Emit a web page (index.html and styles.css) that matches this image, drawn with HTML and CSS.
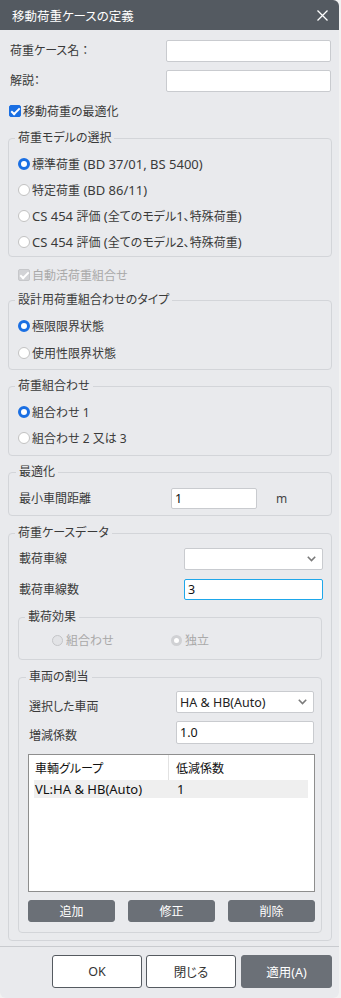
FILE: index.html
```html
<!DOCTYPE html>
<html lang="ja">
<head>
    <meta charset="UTF-8">
    <title>移動荷重ケースの定義</title>
    <link rel="stylesheet" href="styles.css">
</head>
<body>
    <div class="dialog">
        <div class="titlebar">
            <span>移動荷重ケースの定義</span>
            <svg class="close" width="11" height="11" viewBox="0 0 11 11">
                <path d="M0.5 0.5 L10.5 10.5 M10.5 0.5 L0.5 10.5" stroke="#fff" stroke-width="1.3"/>
            </svg>
        </div>

        <div class="content">
            <div class="field-row top-row">
                <span class="label">荷重ケース名 ：</span>
                <input class="text-input wide" type="text" value="">
            </div>
            <div class="field-row top-row second">
                <span class="label">解説：</span>
                <input class="text-input wide" type="text" value="">
            </div>
            <div class="check-row">
                <span class="checkbox checked"></span>
                <span>移動荷重の最適化</span>
            </div>

            <fieldset class="group g-model">
                <legend>荷重モデルの選択</legend>
                <div class="radio-row"><span class="radio checked"></span>標準荷重<span class="en">&nbsp;(BD 37/01, BS 5400)</span></div>
                <div class="radio-row"><span class="radio"></span>特定荷重<span class="en">&nbsp;(BD 86/11)</span></div>
                <div class="radio-row"><span class="radio"></span><span class="en">CS 454&nbsp;</span>評価<span class="en">&nbsp;(</span>全てのモデル<span class="en">1</span>、特殊荷重<span class="en">)</span></div>
                <div class="radio-row"><span class="radio"></span><span class="en">CS 454&nbsp;</span>評価<span class="en">&nbsp;(</span>全てのモデル<span class="en">2</span>、特殊荷重<span class="en">)</span></div>
            </fieldset>

            <div class="check-row disabled auto">
                <span class="checkbox checked"></span>
                <span>自動活荷重組合せ</span>
            </div>

            <fieldset class="group g-type">
                <legend>設計用荷重組合わせのタイプ</legend>
                <div class="radio-row tall"><span class="radio checked"></span>極限限界状態</div>
                <div class="radio-row tall"><span class="radio"></span>使用性限界状態</div>
            </fieldset>

            <fieldset class="group g-comb">
                <legend>荷重組合わせ</legend>
                <div class="radio-row"><span class="radio checked"></span>組合わせ 1</div>
                <div class="radio-row"><span class="radio"></span>組合わせ 2 又は 3</div>
            </fieldset>

            <fieldset class="group g-opt">
                <legend>最適化</legend>
                <div class="field-row opt-row">
                    <span class="label">最小車間距離</span>
                    <input class="text-input dist" type="text" value="1">
                    <span class="unit">m</span>
                </div>
            </fieldset>

            <fieldset class="group g-data">
                <legend>荷重ケースデータ</legend>
                <div class="field-row lane-row">
                    <span class="label">載荷車線</span>
                    <div class="select lane-select">
                        <span></span>
                        <svg width="9" height="6" viewBox="0 0 9 6"><path d="M0.8 0.8 L4.5 4.5 L8.2 0.8" fill="none" stroke="#7a7a7a" stroke-width="1.6"/></svg>
                    </div>
                </div>
                <div class="field-row lane-row count">
                    <span class="label">載荷車線数</span>
                    <input class="text-input lane-count" type="text" value="3">
                </div>

                <fieldset class="group sub g-effect">
                    <legend>載荷効果</legend>
                    <div class="effect-row">
                        <div class="effect-item first"><span class="radio off"></span>組合わせ</div>
                        <div class="effect-item"><span class="radio off checked"></span>独立</div>
                    </div>
                </fieldset>

                <fieldset class="group sub g-vehicle">
                    <legend>車両の割当</legend>
                    <div class="field-row veh-row">
                        <span class="label low">選択した車両</span>
                        <div class="select veh-select">
                            <span>HA &amp; HB(Auto)</span>
                            <svg width="9" height="6" viewBox="0 0 9 6"><path d="M0.8 0.8 L4.5 4.5 L8.2 0.8" fill="none" stroke="#7a7a7a" stroke-width="1.6"/></svg>
                        </div>
                    </div>
                    <div class="field-row veh-row factor">
                        <span class="label lower">増減係数</span>
                        <input class="text-input veh-factor" type="text" value="1.0">
                    </div>

                    <div class="grid-table">
                        <div class="grid-head">
                            <div class="cell c1">車輌グループ</div>
                            <div class="cell c2">低減係数</div>
                        </div>
                        <div class="grid-line selected">
                            <div class="cell c1">VL:HA &amp; HB(Auto)</div>
                            <div class="cell c2">1</div>
                        </div>
                    </div>

                    <div class="small-buttons">
                        <button class="btn dark">追加</button>
                        <button class="btn dark">修正</button>
                        <button class="btn dark">削除</button>
                    </div>
                </fieldset>
            </fieldset>
        </div>

        <div class="footer">
            <button class="btn light">OK</button>
            <button class="btn light">閉じる</button>
            <button class="btn dark">適用(A)</button>
        </div>
    </div>
</body>
</html>
```

FILE: styles.css
```css
* {
    margin: 0;
    padding: 0;
    box-sizing: border-box;
}

body {
    background: #f2f2f2;
    font-family: "Noto Sans", "Noto Sans CJK JP", sans-serif;
    font-size: 12px;
    color: #3a3a3a;
    font-feature-settings: "palt";
}

.dialog {
    width: 339px;
    height: 998px;
    background: #e9eaed;
    border-radius: 0 6px 6px 6px;
    overflow: hidden;
    display: flex;
    flex-direction: column;
}

.titlebar {
    height: 30px;
    background: #545a61;
    color: #fff;
    display: flex;
    align-items: center;
    justify-content: space-between;
    padding: 0 11px 0 12px;
    font-size: 12.5px;
}

.content {
    flex: 1;
    padding: 10px 7px 0 8px;
}

/* rows */
.field-row {
    display: flex;
    align-items: center;
}

.label {
    line-height: 16px;
}

.top-row {
    height: 22px;
    padding-left: 2px;
}

.top-row.second {
    margin-top: 8px;
}

.text-input {
    height: 22px;
    border: 1px solid #c9cbcf;
    border-radius: 2px;
    background: #fff;
    font-family: "Noto Sans", "Noto Sans CJK JP", sans-serif;
    font-size: 12.5px;
    color: #111;
    padding: 0 3px;
    outline: none;
}

.text-input.wide {
    width: 165px;
    margin-left: auto;
    margin-right: 1px;
}

.check-row {
    display: flex;
    align-items: center;
    height: 18px;
    margin-top: 10px;
    padding-left: 1px;
}

.check-row.auto {
    margin-top: 9px;
    padding-left: 10px;
}

.check-row.disabled {
    color: #a9a9a9;
}

.checkbox {
    width: 12px;
    height: 12px;
    border-radius: 2px;
    border: 1px solid #b5b5b5;
    background: #fff;
    margin-right: 2px;
    position: relative;
}

.checkbox.checked {
    background: #1a6fe3;
    border-color: #1a6fe3;
}

.checkbox.checked::after {
    content: '';
    position: absolute;
    left: 3px;
    top: 0px;
    width: 3px;
    height: 7px;
    border: solid #fff;
    border-width: 0 2px 2px 0;
    transform: rotate(45deg);
}

.disabled .checkbox.checked {
    background: #d2d3d6;
    border-color: #c6c7ca;
}

/* groups */
.group {
    border: 1px solid #d3d5d9;
    border-radius: 4px;
    padding: 0 7px 0 9px;
    margin-top: 9px;
}

.group legend {
    line-height: 14px;
    padding: 0 3px;
    margin-left: -3px;
}

.g-model {
    margin-top: 11px;
    padding-top: 6px;
    padding-bottom: 1px;
}

.g-type {
    padding-top: 5px;
    padding-bottom: 3px;
}

.g-comb {
    padding-top: 6px;
    padding-bottom: 4px;
}

.radio-row {
    height: 26px;
    display: flex;
    align-items: center;
    white-space: pre;
}

.radio-row .en {
    font-size: 13px;
}

.radio-row.tall {
    height: 27px;
}

.radio {
    width: 12px;
    height: 12px;
    border-radius: 50%;
    border: 1px solid #c2c2c2;
    background: #fff;
    margin-right: 2px;
    flex-shrink: 0;
}

.radio.checked {
    border: 3.5px solid #1a6fe3;
}

.radio.off {
    background: #e2e3e6;
    border-color: #c4c5c8;
}

.radio.off.checked {
    background: #fff;
    border: 3.5px solid #d0d1d4;
}

/* optimisation */
.g-opt {
    margin-top: 9px;
    padding: 8px 7px 5px 10px;
}

.opt-row {
    height: 23px;
}

.text-input.dist {
    width: 86px;
    height: 21px;
    margin-left: 80px;
}

.unit {
    margin-left: 19px;
    color: #444;
}

/* load case data */
.g-data {
    margin-top: 10px;
    padding: 8px 8px 7px 9px;
}

.lane-row {
    height: 22px;
    padding-left: 1px;
}

.lane-row.count {
    margin-top: 9px;
    height: 21px;
}

.select {
    height: 22px;
    border: 1px solid #c9cbcf;
    border-radius: 2px;
    background: #fff;
    display: flex;
    align-items: center;
    justify-content: space-between;
    padding: 0 6px 0 3px;
    font-size: 12.5px;
    color: #222;
    margin-left: auto;
}

.lane-select {
    width: 139px;
}

.text-input.lane-count {
    width: 139px;
    height: 21px;
    margin-left: auto;
    border-color: #1ea7ea;
}

.group.sub {
    margin-top: 10px;
    margin-right: 1px;
    padding: 7px 6px 10px 9px;
}

.effect-row {
    height: 18px;
    display: flex;
    align-items: center;
    padding-left: 24px;
    color: #a9a9a9;
}

.effect-item {
    display: flex;
    align-items: center;
}

.effect-item.first {
    width: 119px;
}

.effect-item .radio {
    width: 11px;
    height: 11px;
    margin-right: 3px;
}

.g-vehicle {
    padding: 7px 6px 7px 7px;
}

.g-vehicle legend {
    margin-left: -2px;
}

.veh-row {
    height: 22px;
    padding-left: 1px;
}

.veh-row.factor {
    margin-top: 8px;
    height: 23px;
}

.label.low {
    padding-top: 10px;
}

.label.lower {
    padding-top: 7px;
}

.veh-select {
    width: 138px;
    margin-right: 1px;
}

.text-input.veh-factor {
    width: 138px;
    height: 23px;
    margin-left: auto;
    margin-right: 1px;
}

.grid-table {
    margin-top: 10px;
    height: 138px;
    background: #fff;
    border: 1px solid #8e8e8e;
    padding: 0 6px 0 5px;
    color: #111;
}

.grid-head,
.grid-line {
    display: flex;
}

.grid-head {
    height: 25px;
    align-items: center;
    margin-right: 1px;
}

.grid-line {
    height: 18px;
    align-items: center;
    font-size: 13px;
}

.grid-line.selected {
    background: #efefef;
}

.cell {
    height: 100%;
    display: flex;
    align-items: center;
    padding-left: 1px;
}

.cell.c1 {
    width: 135px;
}

.grid-head .cell.c1 {
    border-right: 1px solid #e2e2e2;
}

.cell.c2 {
    flex: 1;
    padding-left: 7px;
}

.grid-line .cell.c2 {
    padding-left: 8px;
}

/* buttons */
.small-buttons {
    margin-top: 8px;
    display: flex;
    justify-content: space-between;
}

.btn {
    font-family: "Noto Sans", "Noto Sans CJK JP", sans-serif;
    font-size: 12px;
    font-feature-settings: "palt";
    border-radius: 3px;
    cursor: pointer;
}

.small-buttons .btn {
    width: 87px;
    height: 22px;
}

.btn.dark {
    background: #6b7077;
    border: 1px solid #6b7077;
    color: #fff;
}

.btn.light {
    background: #fff;
    border: 1px solid #555a60;
    color: #333;
}

.footer {
    height: 52px;
    border-top: 1px solid #c9cbcf;
    display: flex;
    justify-content: flex-end;
    gap: 4px;
    padding: 8px 7px 0 0;
}

.footer .btn {
    width: 90px;
    height: 33px;
    font-size: 12.5px;
}

.footer .btn.dark {
    width: 91px;
    margin-left: 1px;
}
```
